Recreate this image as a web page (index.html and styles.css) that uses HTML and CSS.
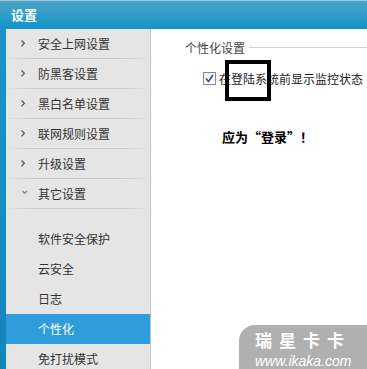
FILE: index.html
```html
<!DOCTYPE html>
<html lang="zh-CN">
<head>
  <meta charset="UTF-8" />
  <title>设置</title>
  <link rel="stylesheet" href="styles.css">
</head>
<body>

<div class="window">
  <div class="titlebar">设置</div>

  <div class="main">
    <div class="sidebar">
      <div class="item"><span class="arrow">&#x203A;</span>安全上网设置</div>
      <div class="item"><span class="arrow">&#x203A;</span>防黑客设置</div>
      <div class="item"><span class="arrow">&#x203A;</span>黑白名单设置</div>
      <div class="item"><span class="arrow">&#x203A;</span>联网规则设置</div>
      <div class="item"><span class="arrow">&#x203A;</span>升级设置</div>
      <div class="item open"><span class="arrow down">&#x203A;</span>其它设置</div>
      <div class="sub">
        <div class="sub-item">软件安全保护</div>
        <div class="sub-item">云安全</div>
        <div class="sub-item">日志</div>
        <div class="sub-item active">个性化</div>
        <div class="sub-item">免打扰模式</div>
      </div>
    </div>

    <div class="content">
      <div class="group-title"><span>个性化设置</span></div>
      <label class="check">
        <span class="box">
          <svg width="9" height="9" viewBox="0 0 9 9"><path d="M1 4.5 L3.5 7.5 L8 1" fill="none" stroke="#2a4fa8" stroke-width="1.6"/></svg>
        </span>
        在登陆系统前显示监控状态
      </label>
      <div class="mark"></div>
      <p class="note">应为“登录”！</p>

      <div class="stamp">
        <div class="stamp-name">瑞星卡卡</div>
        <div class="stamp-url">www.ikaka.com</div>
      </div>
    </div>
  </div>
</div>

</body>
</html>
```

FILE: styles.css
```css
/* 基本 */
body {
  margin: 0;
  font-family: "Noto Sans CJK SC", "Liberation Sans", sans-serif;
  font-size: 12px;
  color: #333;
}

.window {
  width: 367px;
  height: 369px;
  display: flex;
  flex-direction: column;
  background: #1b8fc2;
  overflow: hidden;
}

/* 标题栏 */
.titlebar {
  height: 28px;
  line-height: 27px;
  padding-left: 11px;
  color: #fff;
  font-size: 13px;
  font-weight: bold;
  border-top: 1px solid #9cc7e0;
  box-sizing: border-box;
  background: linear-gradient(to bottom, #4ea3c8, #2f9cc6 55%, #0f96c8);
}

.main {
  flex: 1;
  display: flex;
  padding-left: 6px;
  padding-top: 1px;
  background: linear-gradient(to bottom, #1a93c6, #1487bb);
}

/* 左侧菜单 */
.sidebar {
  width: 144px;
  background: #e5e5e5;
  border-right: 1px solid #c4c4c4;
}

.item {
  height: 30px;
  line-height: 29px;
  padding-left: 14px;
  display: flex;
  align-items: center;
  border-bottom: 1px solid transparent;
  border-image: linear-gradient(to right, #e5e5e5, #c9c9c9 20%, #c9c9c9 80%, #e5e5e5) 1;
  box-sizing: border-box;
}

.arrow {
  width: 18px;
  font-size: 15px;
  color: #444;
  font-family: "DejaVu Sans", sans-serif;
}

.arrow.down {
  display: inline-block;
  transform: rotate(90deg) translateX(1px);
  width: 10px;
  margin-right: 8px;
  font-size: 13px;
  color: #666;
}

.sub {
  padding-top: 15px;
}

.sub-item {
  height: 30px;
  line-height: 30px;
  padding-left: 32px;
  position: relative;
}

.sub-item.active {
  background: #2f9ddb;
  color: #fff;
}

.sub-item.active::after {
  content: "";
  position: absolute;
  right: -6px;
  top: 9px;
  border-left: 5px solid #2f9ddb;
  border-top: 6px solid transparent;
  border-bottom: 6px solid transparent;
}

/* 右侧内容 */
.content {
  flex: 1;
  background: #fff;
  position: relative;
  padding-left: 34px;
}

.group-title {
  display: flex;
  align-items: center;
  margin-top: 10px;
  color: #444;
}

.group-title::after {
  content: "";
  flex: 1;
  height: 1px;
  background: #d4d4d4;
  margin-left: 4px;
}

.check {
  display: flex;
  align-items: center;
  margin-top: 14px;
  margin-left: 18px;
  color: #222;
  white-space: nowrap;
}

.box {
  width: 11px;
  height: 11px;
  border: 1px solid #8a8a8a;
  background: linear-gradient(#f0f0f0, #fff);
  display: flex;
  align-items: center;
  justify-content: center;
  margin-right: 3px;
}

.mark {
  position: absolute;
  left: 74px;
  top: 31px;
  width: 38px;
  height: 33px;
  border: 4px solid #000;
}

.note {
  margin: 40px 0 0 37px;
  font-size: 13px;
  font-weight: bold;
  color: #000;
}

/* 水印 */
.stamp {
  position: absolute;
  right: -20px;
  bottom: 0;
  width: 148px;
  height: 49px;
  border-radius: 16px 0 0 0;
  background: rgba(150, 150, 150, 0.75);
  color: #fff;
  padding: 3px 0 0 16px;
  box-sizing: border-box;
}

.stamp-name {
  font-size: 17px;
  font-weight: bold;
  line-height: 24px;
  letter-spacing: 7px;
}

.stamp-url {
  font-family: "Liberation Sans", sans-serif;
  font-style: italic;
  font-size: 14px;
  line-height: 18px;
}
```
